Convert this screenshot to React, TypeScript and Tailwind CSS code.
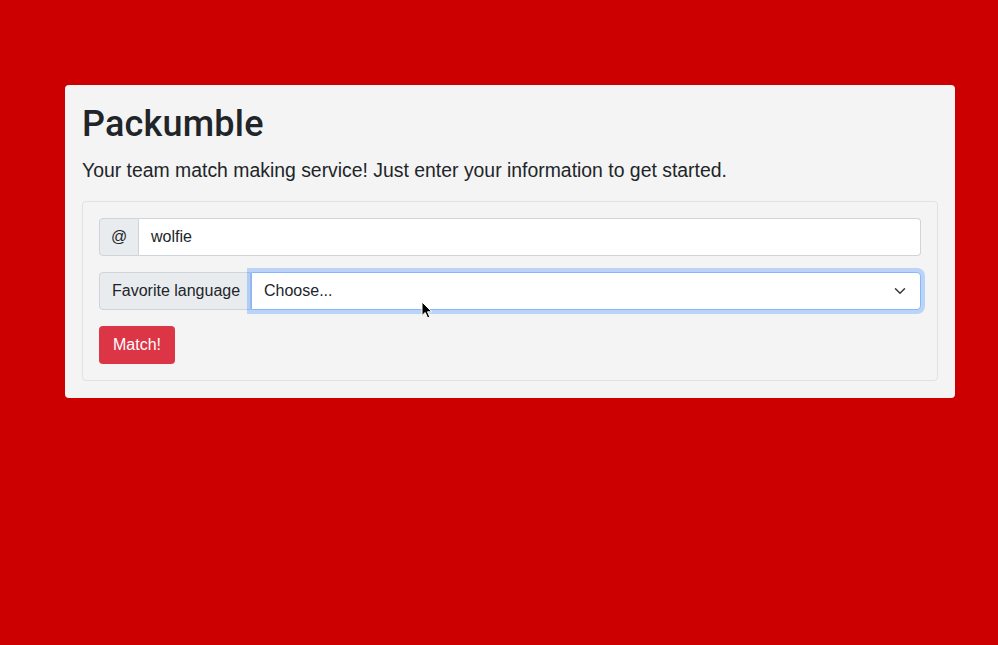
import React from 'react';

const font = { fontFamily: '"Liberation Sans", Arial, sans-serif' };

export default function App() {
  return (
    <div className="h-[645px] w-full bg-[#cc0000] pt-[85px] pl-[65px] relative overflow-hidden" style={font}>
      <div className="w-[890px] rounded-[4px] bg-[#f4f4f4] px-[17px] pt-[17px] pb-[17px] text-[#212529]">
        <h1 className="text-[36px] leading-[45px] font-medium mb-2 tracking-[0.2px]" style={{ fontFamily: 'Roboto, "Liberation Sans", sans-serif' }}>Packumble</h1>
        <p className="text-[19.4px] leading-[30px] font-light mb-4">
          Your team match making service! Just enter your information to get started.
        </p>

        <div className="rounded-[4px] border border-[#dee2e6] p-4">
          {/* username */}
          <div className="flex h-[38px] mb-4 text-[16px]">
            <span className="flex items-center justify-center w-[40px] bg-[#e9ecef] border border-[#ced4da] rounded-l-[4px]">@</span>
            <div className="flex-1 flex items-center bg-white border border-[#ced4da] border-l-0 rounded-r-[4px] px-3">wolfie</div>
          </div>

          {/* language */}
          <div className="flex h-[38px] mb-4 text-[16px]">
            <span className="flex items-center px-3 w-[152px] bg-[#e9ecef] border border-[#ced4da] rounded-l-[4px] whitespace-nowrap">Favorite language</span>
            <div className="flex-1 flex items-center justify-between bg-white border border-[#86b7fe] rounded-r-[4px] pl-3 pr-3 shadow-[0_0_0_4px_rgba(13,110,253,0.25)] relative z-10">
              <span>Choose...</span>
              <svg width="16" height="12" viewBox="0 0 16 16">
                <path d="m2 5 6 6 6-6" fill="none" stroke="#343a40" strokeWidth="2" strokeLinecap="round" strokeLinejoin="round" />
              </svg>
            </div>
          </div>

          <button className="h-[38px] px-[14px] rounded-[4px] bg-[#dc3545] text-white text-[16px]">Match!</button>
        </div>
      </div>

      {/* mouse cursor */}
      <svg className="absolute left-[421px] top-[301px] z-20" width="13" height="19" viewBox="0 0 13 19">
        <path d="M1 1 L1 14.5 L4.2 11.5 L6.6 17 L8.8 16 L6.5 10.8 L10.8 10.8 Z" fill="#000" stroke="#fff" strokeWidth="1" strokeLinejoin="round" />
      </svg>
    </div>
  );
}
